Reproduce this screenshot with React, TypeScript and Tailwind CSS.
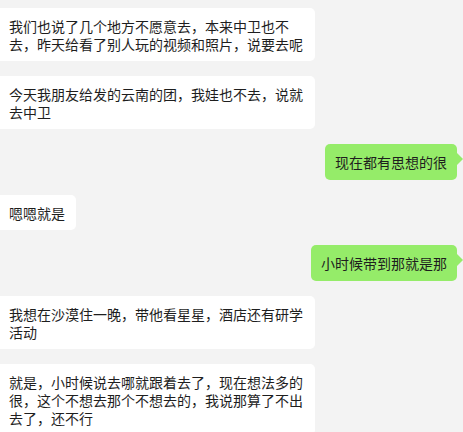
import React from "react";

type Msg = { side: "l" | "r"; text: string };

const msgs: Msg[] = [
  { side: "l", text: "我们也说了几个地方不愿意去，本来中卫也不去，昨天给看了别人玩的视频和照片，说要去呢" },
  { side: "l", text: "今天我朋友给发的云南的团，我娃也不去，说就去中卫" },
  { side: "r", text: "现在都有思想的很" },
  { side: "l", text: "嗯嗯就是" },
  { side: "r", text: "小时候带到那就是那" },
  { side: "l", text: "我想在沙漠住一晚，带他看星星，酒店还有研学活动" },
  { side: "l", text: "就是，小时候说去哪就跟着去了，现在想法多的很，这个不想去那个不想去的，我说那算了不出去了，还不行" },
];

export default function App() {
  return (
    <div
      className="w-[463px] h-[432px] overflow-hidden bg-[#f3f3f3] pt-[8px] flex flex-col gap-[15px] text-[14px] leading-[18px] text-[#1e1e1e]"
      style={{ fontFamily: '"Microsoft YaHei", "Noto Sans CJK SC", "Noto Sans", sans-serif' }}
    >
      {msgs.map((m, i) =>
        m.side === "l" ? (
          <div key={i} className="flex justify-start">
            <div className="max-w-[315px] bg-white rounded-r-[5px] pl-[9px] pr-[11px] pt-[9px] pb-[8px] break-all">
              {m.text}
            </div>
          </div>
        ) : (
          <div key={i} className="flex justify-end pr-[6px]">
            <div className="relative bg-[#95ec69] rounded-[5px] px-[10px] pt-[9px] pb-[9px]">
              {m.text}
              <span className="absolute right-[-6px] top-[9px] w-0 h-0 border-y-[6px] border-y-transparent border-l-[6px] border-l-[#95ec69]" />
            </div>
          </div>
        )
      )}
    </div>
  );
}
